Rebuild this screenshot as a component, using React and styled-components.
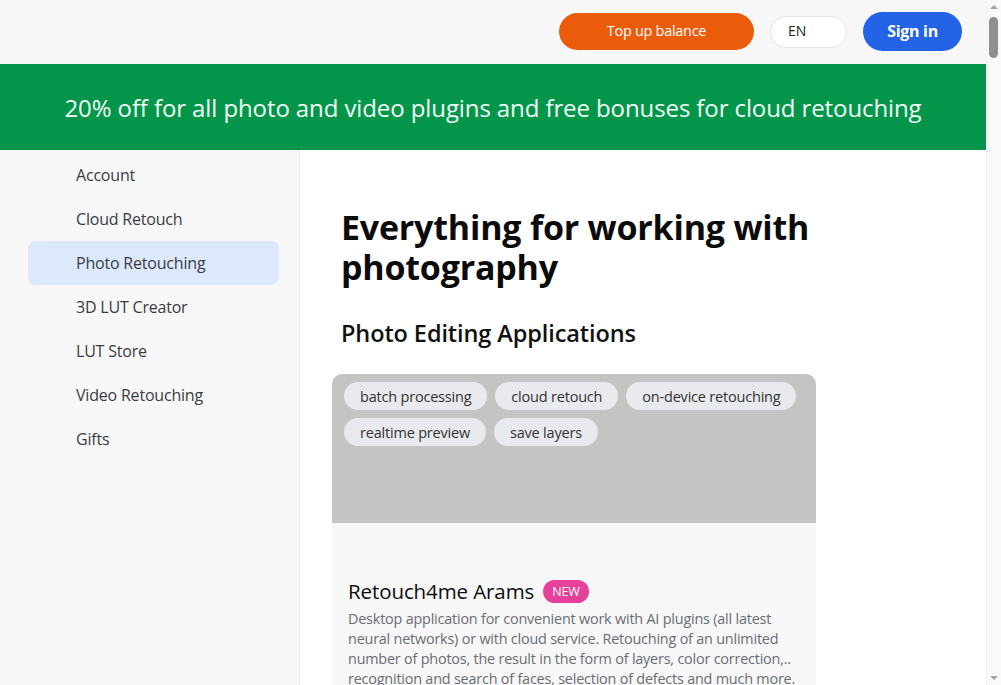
import React from "react";
import styled, { createGlobalStyle } from "styled-components";

const Global = createGlobalStyle`
  html, body { margin: 0; padding: 0; }
  body {
    font-family: "Open Sans", "Noto Sans", sans-serif;
    background: #f7f7f8;
    color: #111;
    padding-right: 15px;
  }
  * { box-sizing: border-box; }
`;

const ScrollTrack = styled.div`
  position: fixed;
  top: 0;
  right: 0;
  width: 15px;
  height: 100vh;
  background: #f9f9f9;
  border-left: 1px solid #f0f0f0;
  z-index: 10;
`;

const ScrollArrow = styled.div`
  position: absolute;
  left: 3px;
  width: 0;
  height: 0;
  border-left: 4px solid transparent;
  border-right: 4px solid transparent;
  ${(p) =>
    p.$up
      ? "top: 5px; border-bottom: 4px solid #a3a3a3;"
      : "bottom: 5px; border-top: 4px solid #a3a3a3;"}
`;

const ScrollThumb = styled.div`
  position: absolute;
  top: 17px;
  left: 2px;
  width: 9px;
  height: 41px;
  border-radius: 5px;
  background: #8f8f8f;
`;

const Header = styled.header`
  height: 64px;
  background: #f7f7f8;
  display: flex;
  align-items: center;
  justify-content: flex-end;
  gap: 16px;
  padding: 0 24px 1px 0;
`;

const PillButton = styled.button`
  border: none;
  border-radius: 999px;
  font-family: inherit;
  height: ${(p) => p.$h}px;
  width: ${(p) => p.$w}px;
  background: ${(p) => p.$bg};
  color: ${(p) => p.$color};
  font-size: ${(p) => p.$size}px;
  font-weight: ${(p) => p.$weight};
  letter-spacing: -0.3px;
  display: flex;
  align-items: center;
  justify-content: center;
  padding: 0 0 2px;
`;

const LangSelect = styled.div`
  height: 32px;
  width: 77px;
  border-radius: 999px;
  background: #fff;
  border: 1px solid #e3e4e6;
  font-size: 14px;
  color: #222;
  display: flex;
  align-items: center;
  padding: 0 0 2px 17px;
`;

const Banner = styled.div`
  height: 86px;
  background: #03964b;
  color: #f2fff6;
  display: flex;
  align-items: center;
  justify-content: center;
  font-size: 24px;
  letter-spacing: -0.1px;
`;

const Layout = styled.div`
  display: flex;
  align-items: stretch;
`;

const Sidebar = styled.nav`
  width: 300px;
  flex-shrink: 0;
  background: #f7f7f8;
  border-right: 1px solid #eeeeef;
  padding: 3px 20px 0 28px;
  display: flex;
  flex-direction: column;
`;

const NavItem = styled.a`
  display: flex;
  align-items: center;
  height: 44px;
  padding-left: 48px;
  border-radius: 8px;
  font-size: 16px;
  color: #3b3c40;
  letter-spacing: -0.2px;
  background: ${(p) => (p.$active ? "#dce8fb" : "transparent")};
`;

const Main = styled.main`
  flex: 1;
  background: #fff;
  padding: 57px 0 40px 41px;
  min-height: 600px;
`;

const Content = styled.div`
  width: 476px;
`;

const Title = styled.h1`
  margin: 0;
  font-size: 34px;
  line-height: 40px;
  font-weight: 700;
  letter-spacing: -0.2px;
  color: #0b0b0c;
`;

const SubTitle = styled.h2`
  margin: 31px 0 0;
  font-size: 23.5px;
  line-height: 30px;
  font-weight: 600;
  letter-spacing: -0.1px;
  color: #111;
`;

const Card = styled.article`
  margin: 26px 0 0 -9px;
  width: 484px;
  border-radius: 10px;
  overflow: hidden;
  background: #f7f7f8;
`;

const Preview = styled.div`
  height: 149px;
  background: #c4c4c4;
  padding: 8px 12px;
  display: flex;
  flex-wrap: wrap;
  align-content: flex-start;
  gap: 8px;
`;

const Tag = styled.span`
  height: 28px;
  display: inline-flex;
  align-items: center;
  padding: 0 16px;
  border-radius: 999px;
  background: #e8eaed;
  color: #333;
  font-size: 14.5px;
  letter-spacing: -0.2px;
`;

const CardBody = styled.div`
  padding: 55px 16px 20px;
`;

const CardTitleRow = styled.div`
  display: flex;
  align-items: center;
  gap: 9px;
`;

const CardTitle = styled.h3`
  margin: 0;
  font-size: 20.5px;
  font-weight: 500;
  line-height: 26px;
  letter-spacing: -0.1px;
  color: #0d0d0d;
`;

const Badge = styled.span`
  display: inline-flex;
  align-items: center;
  height: 23px;
  padding: 0 9px;
  border-radius: 999px;
  background: #e6409b;
  color: #fff;
  font-size: 12.5px;
  letter-spacing: -0.2px;
`;

const CardText = styled.p`
  margin: 5px 0 0;
  font-size: 14.4px;
  line-height: 20px;
  color: #6a6d72;
  letter-spacing: -0.2px;
`;

const nav = [
  "Account",
  "Cloud Retouch",
  "Photo Retouching",
  "3D LUT Creator",
  "LUT Store",
  "Video Retouching",
  "Gifts",
];

const tags = [
  "batch processing",
  "cloud retouch",
  "on-device retouching",
  "realtime preview",
  "save layers",
];

export default function App() {
  return (
    <>
      <Global />
      <ScrollTrack>
        <ScrollArrow $up />
        <ScrollThumb />
        <ScrollArrow />
      </ScrollTrack>
      <Header>
        <PillButton $w={195} $h={37} $bg="#ea5b0c" $color="#fff" $size={14.5} $weight={400}>
          Top up balance
        </PillButton>
        <LangSelect>EN</LangSelect>
        <PillButton $w={99} $h={39} $bg="#2563e6" $color="#fff" $size={16} $weight={700}>
          Sign in
        </PillButton>
      </Header>
      <Banner>20% off for all photo and video plugins and free bonuses for cloud retouching</Banner>
      <Layout>
        <Sidebar>
          {nav.map((n) => (
            <NavItem key={n} $active={n === "Photo Retouching"}>
              {n}
            </NavItem>
          ))}
        </Sidebar>
        <Main>
          <Content>
            <Title>Everything for working with photography</Title>
            <SubTitle>Photo Editing Applications</SubTitle>
            <Card>
              <Preview>
                {tags.map((t) => (
                  <Tag key={t}>{t}</Tag>
                ))}
              </Preview>
              <CardBody>
                <CardTitleRow>
                  <CardTitle>Retouch4me Arams</CardTitle>
                  <Badge>NEW</Badge>
                </CardTitleRow>
                <CardText>
                  Desktop application for convenient work with AI plugins (all latest neural
                  networks) or with cloud service. Retouching of an unlimited number of photos,
                  the result in the form of layers, color correction,.. recognition and search of
                  faces, selection of defects and much more.
                </CardText>
              </CardBody>
            </Card>
          </Content>
        </Main>
      </Layout>
    </>
  );
}
